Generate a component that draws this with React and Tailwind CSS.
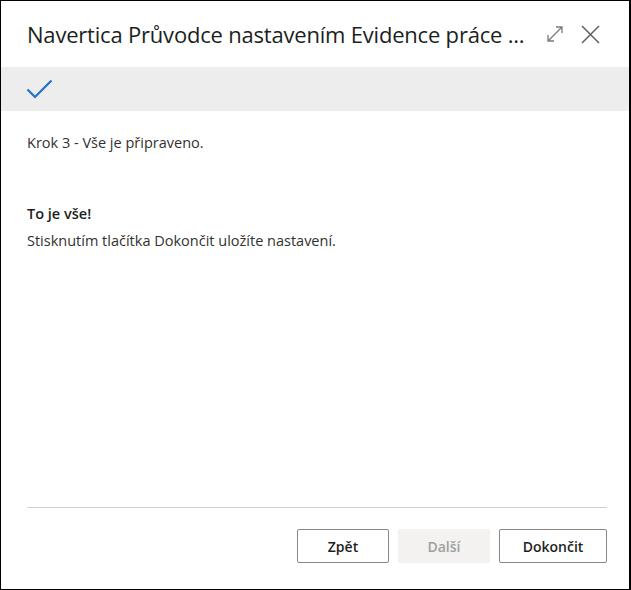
import React from "react";

export default function App() {
  return (
    <div className="w-[631px] h-[590px] bg-white border border-black border-r-2 flex flex-col text-[#323130]" style={{ fontFamily: '"Open Sans", "Noto Sans", sans-serif' }}>
      <div className="h-[66px] flex items-center pl-[26px] pr-[29px]">
        <div className="flex-1 text-[22px] leading-[28px] whitespace-nowrap text-[#201f1e] tracking-[-0.2px]">
          Navertica Průvodce nastavením Evidence práce ...
        </div>
        <div className="flex items-center gap-[17px] ml-4">
          <svg width="18" height="18" viewBox="0 0 18 18" fill="none" stroke="#7a7a7a" strokeWidth="1.3">
            <path d="M2 16 L16 2 M10 2 H16 V8 M2 10 V16 H8" />
          </svg>
          <svg width="19" height="19" viewBox="0 0 19 19" fill="none" stroke="#605e5c" strokeWidth="1.5">
            <path d="M1 1 L18 18 M18 1 L1 18" />
          </svg>
        </div>
      </div>
      <div className="h-[44px] bg-[#ededed] flex items-center pl-[25px]">
        <svg width="27" height="20" viewBox="0 0 27 20" fill="none" stroke="#1f73c8" strokeWidth="2.2">
          <path d="M1.5 10.5 L9 18 L25.5 1.5" />
        </svg>
      </div>
      <div className="flex-1 flex flex-col pl-[26px] pr-[22px] text-[14.5px]">
        <div className="mt-[22px] h-[20px] leading-[20px] text-[#323130]">Krok 3 - Vše je připraveno.</div>
        <div className="mt-[51px] h-[20px] leading-[20px] font-semibold text-[#201f1e]">To je vše!</div>
        <div className="mt-[7px] h-[20px] leading-[20px] text-[#323130]">Stisknutím tlačítka Dokončit uložíte nastavení.</div>
        <div className="flex-1" />
        <div className="h-px bg-[#d2d0ce]" />
        <div className="flex justify-end gap-[9px] pt-[21px] pb-[26px]">
          <button className="w-[92px] h-[34px] border border-[#8a8886] rounded-[2px] bg-white text-[14px] font-semibold text-[#201f1e]">Zpět</button>
          <button className="w-[92px] h-[34px] rounded-[2px] bg-[#f3f2f1] text-[14px] font-semibold text-[#a19f9d]">Další</button>
          <button className="w-[108px] h-[34px] border border-[#8a8886] rounded-[2px] bg-white text-[14px] font-semibold text-[#201f1e]">Dokončit</button>
        </div>
      </div>
    </div>
  );
}
